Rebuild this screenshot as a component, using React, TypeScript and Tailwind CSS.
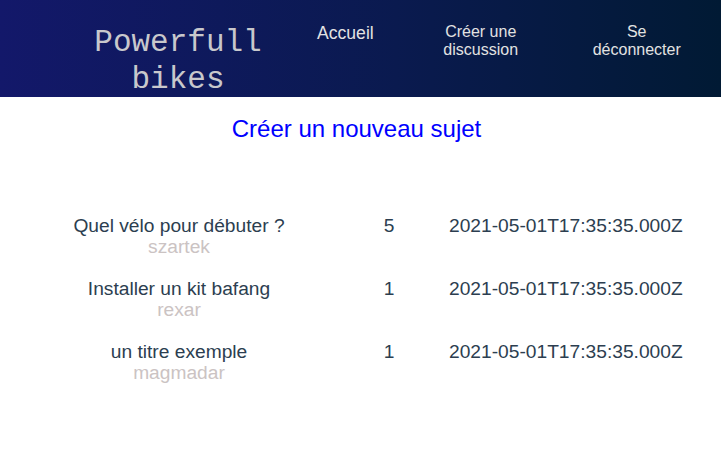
import React from "react";

const rows = [
  { title: "Quel vélo pour débuter ?", author: "szartek", count: 5, date: "2021-05-01T17:35:35.000Z" },
  { title: "Installer un kit bafang", author: "rexar", count: 1, date: "2021-05-01T17:35:35.000Z" },
  { title: "un titre exemple", author: "magmadar", count: 1, date: "2021-05-01T17:35:35.000Z" },
];

export default function App() {
  return (
    <div className="w-[721px] min-h-[461px] bg-white font-['Liberation_Sans',Arial,sans-serif]">
      <header className="h-[97px] flex items-start bg-[linear-gradient(to_right,#13186a,#0a1a4f_55%,#011a34)]">
        <div className="ml-[40px] w-[276px] pt-[24px] text-center text-[31px] leading-[37px] text-[#c8c8cc] font-['Liberation_Mono','Courier_New',monospace]">
          Powerfull
          <br />
          bikes
        </div>
        <a className="ml-[1px] pt-[23px] text-[17.6px] leading-[20px] text-[#e2e2e2]">Accueil</a>
        <a className="ml-[57px] w-[100px] pt-[23px] text-center text-[16px] leading-[18px] text-[#e2e2e2]">Créer une discussion</a>
        <a className="ml-[56px] w-[100px] pt-[23px] text-center text-[16px] leading-[18px] text-[#e2e2e2]">Se déconnecter</a>
      </header>
      <main>
        <h1 className="mt-[18px] pr-[8px] text-center text-[24px] leading-[27.6px] text-[#0000ff]">Créer un nouveau sujet</h1>
        <div className="mt-[72px] flex flex-col gap-[21px]">
          {rows.map((r) => (
            <div key={r.title} className="grid grid-cols-[358px_62px_1fr] text-[19.2px] text-[#2c3e50]">
              <div className="text-center">
                <div className="leading-[22px]">{r.title}</div>
                <div className="leading-[20px] text-[#cbc3c3]">{r.author}</div>
              </div>
              <div className="text-center leading-[22px]">{r.count}</div>
              <div className="pl-[29px] leading-[22px]">{r.date}</div>
            </div>
          ))}
        </div>
      </main>
    </div>
  );
}
